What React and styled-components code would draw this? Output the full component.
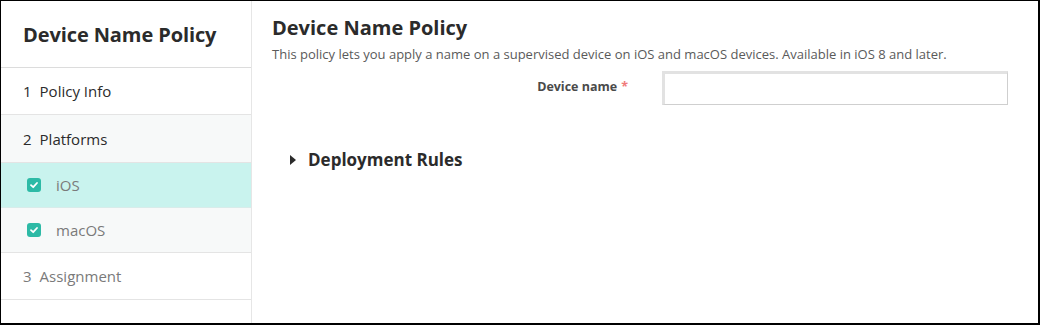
import React from 'react';
import styled, { createGlobalStyle } from 'styled-components';

const GlobalStyle = createGlobalStyle`
  html, body {
    margin: 0;
    padding: 0;
    background: #fff;
    font-family: "Open Sans", "Liberation Sans", sans-serif;
  }
`

const Frame = styled.div`
  box-sizing: border-box;
  width: 1040px;
  height: 325px;
  display: flex;
  border-top: 1px solid #000;
  border-left: 1px solid #000;
  border-right: 2px solid #000;
  border-bottom: 2px solid #000;
  overflow: hidden;
`

const Sidebar = styled.nav`
  flex: 0 0 250px;
  display: flex;
  flex-direction: column;
  border-right: 1px solid #e6e6e6;
`

const SideTitle = styled.div`
  height: 66px;
  border-bottom: 1px solid #dcdcdc;
  display: flex;
  align-items: center;
  padding-left: 22px;
  font-size: 20px;
  font-weight: 700;
  color: #2b2b2b;
  letter-spacing: -0.1px;
`

const Step = styled.div`
  box-sizing: border-box;
  height: ${p => p.$h || 47}px;
  display: flex;
  align-items: center;
  padding-left: ${p => (p.$check ? 26 : 22)}px;
  font-size: 15px;
  color: ${p => (p.$muted ? '#7a7a7a' : '#2b2b2b')};
  background: ${p => (p.$active ? '#c9f3ee' : p.$sub ? '#f7f9f9' : '#fff')};
  border-bottom: 1px solid ${p => (p.$active ? '#d8ecea' : '#e4e4e4')};
`

const Num = styled.span`
  margin-right: 8px;
`

const Check = styled.span`
  width: 14px;
  height: 14px;
  border-radius: 3px;
  background: #2dbaa6;
  display: inline-flex;
  align-items: center;
  justify-content: center;
  margin-right: 15px;
`

const Main = styled.main`
  flex: 1;
  padding: 13px 20px 0 20px;
`

const Title = styled.h1`
  margin: 0;
  font-size: 20px;
  font-weight: 700;
  color: #2b2b2b;
  line-height: 28px;
`

const Desc = styled.p`
  margin: 3px 0 0 0;
  font-size: 13px;
  color: #5a5a5a;
  line-height: 18px;
`

const FormRow = styled.div`
  display: flex;
  align-items: center;
  margin-top: 8px;
`

const Label = styled.label`
  width: 356px;
  text-align: right;
  font-size: 12.5px;
  font-weight: 700;
  color: #4a4a4a;
  margin-top: -4px;
`

const Star = styled.span`
  color: #f07a7a;
  margin-left: 4px;
`

const Input = styled.input`
  box-sizing: border-box;
  margin-left: 34px;
  width: 346px;
  height: 34px;
  border: 1px solid #cfcfcf;
  border-top: 3px solid #e2e2e2;
  border-left: 3px solid #e2e2e2;
  outline: none;
  background: #fff;
`

const Section = styled.div`
  display: flex;
  align-items: center;
  margin-top: 43px;
  margin-left: 18px;
  font-size: 17px;
  font-weight: 700;
  color: #2b2b2b;
`

const Caret = styled.span`
  width: 0;
  height: 0;
  border-top: 5px solid transparent;
  border-bottom: 5px solid transparent;
  border-left: 6px solid #2b2b2b;
  margin-right: 12px;
`

const Tick = () => (
  <svg width="10" height="10" viewBox="0 0 10 10">
    <path d="M2 5.2 L4.2 7.2 L8 3" fill="none" stroke="#fff" strokeWidth="1.8" strokeLinecap="round" strokeLinejoin="round" />
  </svg>
)

export default function App() {
  return (
    <>
      <GlobalStyle />
      <Frame>
        <Sidebar>
          <SideTitle>Device Name Policy</SideTitle>
          <Step><Num>1</Num>Policy Info</Step>
          <Step $sub $h={48}><Num>2</Num>Platforms</Step>
          <Step $sub $check $active $muted $h={45}><Check><Tick /></Check>iOS</Step>
          <Step $sub $check $muted $h={45}><Check><Tick /></Check>macOS</Step>
          <Step $muted><Num>3</Num>Assignment</Step>
        </Sidebar>
        <Main>
          <Title>Device Name Policy</Title>
          <Desc>This policy lets you apply a name on a supervised device on iOS and macOS devices. Available in iOS 8 and later.</Desc>
          <FormRow>
            <Label>Device name<Star>*</Star></Label>
            <Input type="text" />
          </FormRow>
          <Section><Caret />Deployment Rules</Section>
        </Main>
      </Frame>
    </>
  );
}
